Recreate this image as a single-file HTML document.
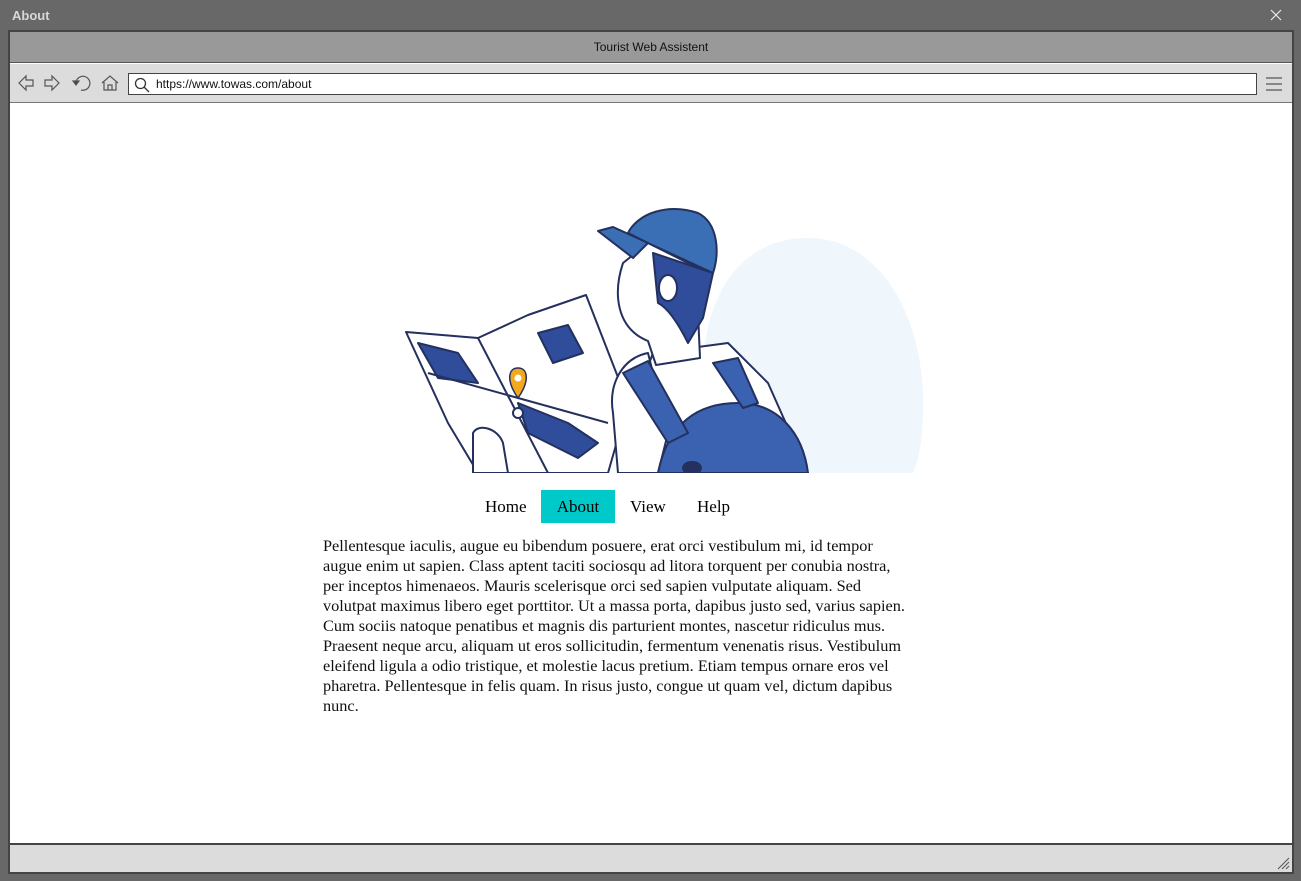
<!DOCTYPE html>
<html><head><style>
*{margin:0;padding:0;box-sizing:border-box}
body{width:1301px;height:881px;background:#686868;position:relative;overflow:hidden;font-family:"Liberation Sans",sans-serif}
.t{position:absolute;left:12px;top:8px;color:#d8d8d8;font-weight:bold;font-size:13px}
.frame{position:absolute;left:8px;top:30px;width:1286px;height:844px;border:2px solid #444;background:#fff}
.band{position:absolute;left:0;top:0;right:0;height:31px;background:#999;border-bottom:1px solid #555;text-align:center;font-size:12px;line-height:31px;color:#111}
.tool{position:absolute;left:0;top:32px;right:0;height:39px;background:#dcdcdc;border-bottom:1px solid #777}
.url{position:absolute;left:118px;top:9px;width:1129px;height:22px;background:#fff;border:1px solid #444;font-size:12px;line-height:20px;padding-left:27px;color:#111}
.status{position:absolute;left:0;bottom:0;right:0;height:29px;background:#dcdcdc;border-top:2px solid #444}
.nav{position:absolute;top:458px;left:0;font-family:"Liberation Serif",serif;font-size:17px}
.nav div{position:absolute;top:0;height:33px;line-height:33px;white-space:nowrap}
.txt{position:absolute;left:313px;top:504px;font-family:"Liberation Serif",serif;font-size:16.3px;line-height:20px;color:#111;white-space:nowrap}
</style></head><body>
<div class="t">About</div>
<svg width="12" height="12" style="position:absolute;left:1270px;top:9px" stroke="#eee" stroke-width="1.2"><path d="M1 1L11 11M11 1L1 11"/></svg>
<div class="frame">
<div class="band">Tourist Web Assistent</div>
<div class="tool">
<svg width="120" height="39" style="position:absolute;left:0;top:0" fill="none" stroke="#555" stroke-width="1.2">
<path d="M9 19 L16 12 V16 H23 V22 H16 V26 Z"/>
<path d="M49 19 L42 12 V16 H35 V22 H42 V26 Z"/>
<path d="M66 18 A7 7 0 1 1 71 26"/><path d="M63 17 L69 17 L66 21 Z" fill="#444"/>
<path d="M92 19 L100 12 L108 19 M94 18 V26 H106 V18 M98 26 V21 H102 V26"/>
</svg>
<div class="url"><svg width="16" height="16" style="position:absolute;left:5px;top:3px" fill="none" stroke="#333" stroke-width="1.3"><circle cx="6.5" cy="6.5" r="5"/><path d="M10 10 L15 15"/></svg>https://www.towas.com/about</div>
<svg width="16" height="14" style="position:absolute;right:10px;top:13px" stroke="#555" stroke-width="1.2"><path d="M0 1H16M0 7H16M0 13H16"/></svg>
</div>
<svg style="position:absolute;left:-2px;top:71px" width="1286" height="370">
<path d="M695 370 L695 260 C700 180 740 135 800 135 C870 135 915 210 915 300 C915 330 912 355 905 370 Z" fill="#eff6fc"/>
<g stroke="#24305e" stroke-width="2" stroke-linejoin="round">
<path d="M398 229 L470 235 L520 212 L578 192 L620 300 L600 370 L470 370 L440 320 Z" fill="#fff"/>
<path d="M410 240 L450 250 L470 280 L430 275 Z" fill="#2f4d9a"/>
<path d="M530 230 L560 222 L575 250 L545 260 Z" fill="#2f4d9a"/>
<path d="M510 300 L560 320 L590 340 L570 355 L520 330 Z" fill="#2f4d9a"/>
<path d="M470 235 L540 370 M420 270 L600 320" fill="none"/>
<path d="M465 330 C470 320 490 325 495 340 L500 370 L465 370 Z" fill="#fff"/>
<path d="M645 250 L720 240 L760 280 L800 370 L630 370 L630 290 Z" fill="#fff"/>
<path d="M640 250 C615 255 600 280 605 310 L610 370 L650 370 L660 330 Z" fill="#fff"/>
<path d="M650 370 C660 320 690 300 730 300 C770 300 795 330 800 370 Z" fill="#3a62b0"/>
<path d="M615 270 L640 258 L680 330 L660 340 Z" fill="#3a62b0"/>
<path d="M705 260 L730 255 L750 300 L735 305 Z" fill="#3a62b0"/>
<path d="M615 160 C605 190 608 225 640 238 L648 262 L692 255 L690 210 L700 170 L640 140 Z" fill="#fff"/>
<path d="M645 150 L705 170 L695 215 L680 240 C670 220 660 205 650 200 Z" fill="#2f4d9a"/>
<path d="M620 130 C630 110 660 100 690 110 C710 120 712 150 705 170 L640 140 Z" fill="#3a6fb5"/>
<path d="M590 128 L605 124 L640 140 L625 155 Z" fill="#3a6fb5"/>
<ellipse cx="660" cy="185" rx="9" ry="13" fill="#fff"/>
</g>
<path d="M510 265 C500 265 498 278 510 295 C522 278 520 265 510 265 Z" fill="#f4a81c" stroke="#24305e" stroke-width="1.5"/>
<circle cx="510" cy="275" r="3.5" fill="#fff"/>
<circle cx="510" cy="310" r="5" fill="#fff" stroke="#24305e" stroke-width="2"/>
<ellipse cx="684" cy="365" rx="10" ry="7" fill="#24305e"/>
</svg>
<div class="nav"><div style="left:475px">Home</div><div style="left:531px;width:74px;background:#00c9c9;text-align:center">About</div><div style="left:620px">View</div><div style="left:687px">Help</div></div>
<div class="txt">Pellentesque iaculis, augue eu bibendum posuere, erat orci vestibulum mi, id tempor<br>augue enim ut sapien. Class aptent taciti sociosqu ad litora torquent per conubia nostra,<br>per inceptos himenaeos. Mauris scelerisque orci sed sapien vulputate aliquam. Sed<br>volutpat maximus libero eget porttitor. Ut a massa porta, dapibus justo sed, varius sapien.<br>Cum sociis natoque penatibus et magnis dis parturient montes, nascetur ridiculus mus.<br>Praesent neque arcu, aliquam ut eros sollicitudin, fermentum venenatis risus. Vestibulum<br>eleifend ligula a odio tristique, et molestie lacus pretium. Etiam tempus ornare eros vel<br>pharetra. Pellentesque in felis quam. In risus justo, congue ut quam vel, dictum dapibus<br>nunc.</div>
<div class="status"><svg width="14" height="14" style="position:absolute;right:2px;bottom:2px" stroke="#555"><path d="M2 13 L13 2 M6 13 L13 6 M10 13 L13 10"/></svg></div>
</div>
</body></html>
